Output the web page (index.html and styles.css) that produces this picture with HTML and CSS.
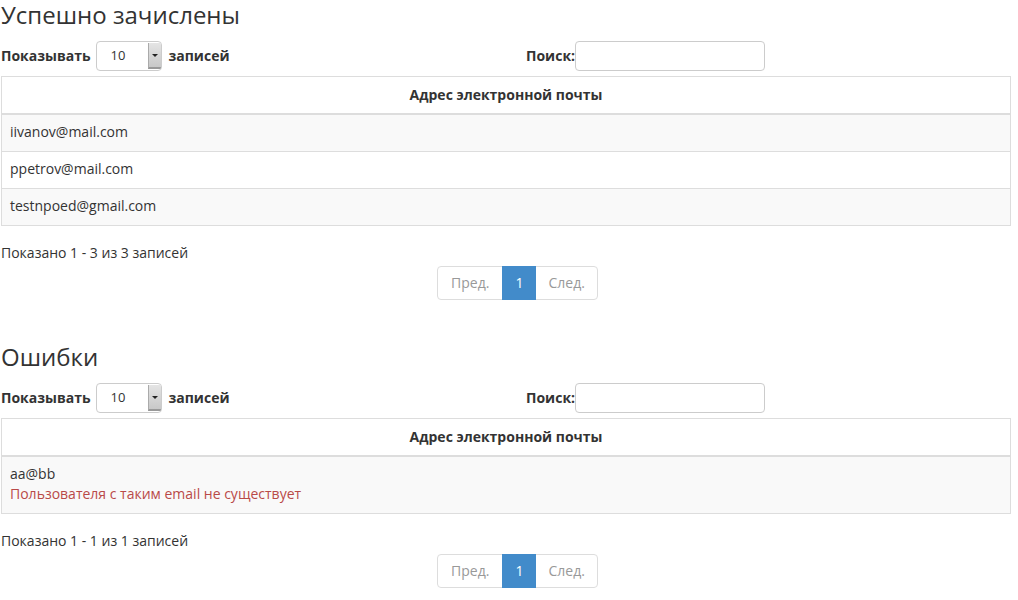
FILE: index.html
```html
<!DOCTYPE html>
<html lang="ru">
<head>
<meta charset="utf-8">
<title>Результаты</title>
<link rel="stylesheet" href="styles.css">
</head>
<body>
<div class="page">
  <section class="block">
    <h3 class="title">Успешно зачислены</h3>
    <div class="controls">
      <div class="length">
        <span class="lbl">Показывать</span>
        <span class="select"><span class="sel-val">10</span><span class="sel-btn"><span class="caret"></span></span></span>
        <span class="lbl">записей</span>
      </div>
      <div class="filter">
        <span class="lbl">Поиск:</span>
        <span class="search"></span>
      </div>
    </div>
    <table class="grid">
      <thead><tr><th>Адрес электронной почты</th></tr></thead>
      <tbody>
        <tr class="odd"><td>iivanov@mail.com</td></tr>
        <tr><td>ppetrov@mail.com</td></tr>
        <tr class="odd"><td>testnpoed@gmail.com</td></tr>
      </tbody>
    </table>
    <div class="info">Показано 1 - 3 из 3 записей</div>
    <div class="pager">
      <span class="pg disabled first">Пред.</span>
      <span class="pg active">1</span>
      <span class="pg next last">След.</span>
    </div>
  </section>

  <section class="block second">
    <h3 class="title">Ошибки</h3>
    <div class="controls">
      <div class="length">
        <span class="lbl">Показывать</span>
        <span class="select"><span class="sel-val">10</span><span class="sel-btn"><span class="caret"></span></span></span>
        <span class="lbl">записей</span>
      </div>
      <div class="filter">
        <span class="lbl">Поиск:</span>
        <span class="search"></span>
      </div>
    </div>
    <table class="grid">
      <thead><tr><th>Адрес электронной почты</th></tr></thead>
      <tbody>
        <tr class="odd"><td>aa@bb<div class="err">Пользователя с таким email не существует</div></td></tr>
      </tbody>
    </table>
    <div class="info">Показано 1 - 1 из 1 записей</div>
    <div class="pager">
      <span class="pg disabled first">Пред.</span>
      <span class="pg active">1</span>
      <span class="pg next last">След.</span>
    </div>
  </section>
</div>
</body>
</html>
```
FILE: styles.css
```css
* { box-sizing: border-box; }
html, body { margin: 0; padding: 0; background: #fff; }
body {
  font-family: "Open Sans", "Noto Sans", sans-serif;
  font-size: 14px;
  line-height: 20px;
  color: #333;
}
.page { width: 1011px; padding-left: 1px; }
.block { padding-top: 2px; }
.block.second { margin-top: 42px; }
.title {
  margin: 0;
  font-size: 24px;
  line-height: 26px;
  font-weight: 400;
  color: #333;
}
.controls {
  margin-top: 13px;
  display: grid;
  grid-template-columns: 525px auto;
  align-items: center;
  height: 30px;
}
.length, .filter { display: flex; align-items: center; }
.lbl { font-weight: 700; font-size: 14px; color: #333; }
.select {
  display: flex;
  width: 66px;
  height: 30px;
  margin: 0 7px 0 5px;
  border: 1px solid #ccc;
  border-radius: 4px;
  overflow: hidden;
  background: #fff;
}
.sel-val {
  flex: 1;
  padding-left: 14px;
  line-height: 26px;
  font-size: 13px;
  color: #333;
}
.sel-btn {
  width: 13px;
  margin: 1px 0;
  background: linear-gradient(#e4e4e4, #c8c8c8);
  border-left: 1px solid #aaa;
  border-bottom: 2px solid #999;
  display: flex;
  align-items: center;
  justify-content: center;
}
.caret {
  width: 0; height: 0;
  border-left: 3px solid transparent;
  border-right: 3px solid transparent;
  border-top: 3px solid #222;
}
.search {
  width: 190px;
  height: 30px;
  border: 1px solid #ccc;
  border-radius: 4px;
  background: #fff;
}
.grid {
  margin-top: 5px;
  width: 1010px;
  border-collapse: collapse;
  border: 1px solid #ddd;
}
.grid th {
  padding: 8px;
  font-weight: 700;
  text-align: center;
  border: 1px solid #ddd;
  border-bottom-width: 2px;
  line-height: 20px;
}
.grid td {
  padding: 7px 8px 9px 8px;
  border: 1px solid #ddd;
  line-height: 20px;
  text-align: left;
}
.grid tr.odd td { background: #f9f9f9; }
.err { color: #b94a48; }
.info {
  margin-top: 10px;
  padding-top: 7px;
  padding-bottom: 1px;
  line-height: 20px;
  font-size: 14px;
}
.pager {
  margin-top: 2px;
  display: flex;
  justify-content: center;
  padding-left: 24px;
}
.pg {
  display: block;
  padding: 6px 12px;
  line-height: 20px;
  border: 1px solid #ddd;
  margin-left: -1px;
  background: #fff;
  color: #999;
  font-size: 14px;
}
.pg.first { border-radius: 4px 0 0 4px; padding: 6px 13px; }
.pg.last { border-radius: 0 4px 4px 0; }
.pg.active {
  background: #428bca;
  border-color: #428bca;
  color: #fff;
  position: relative;
  z-index: 1;
}
```
